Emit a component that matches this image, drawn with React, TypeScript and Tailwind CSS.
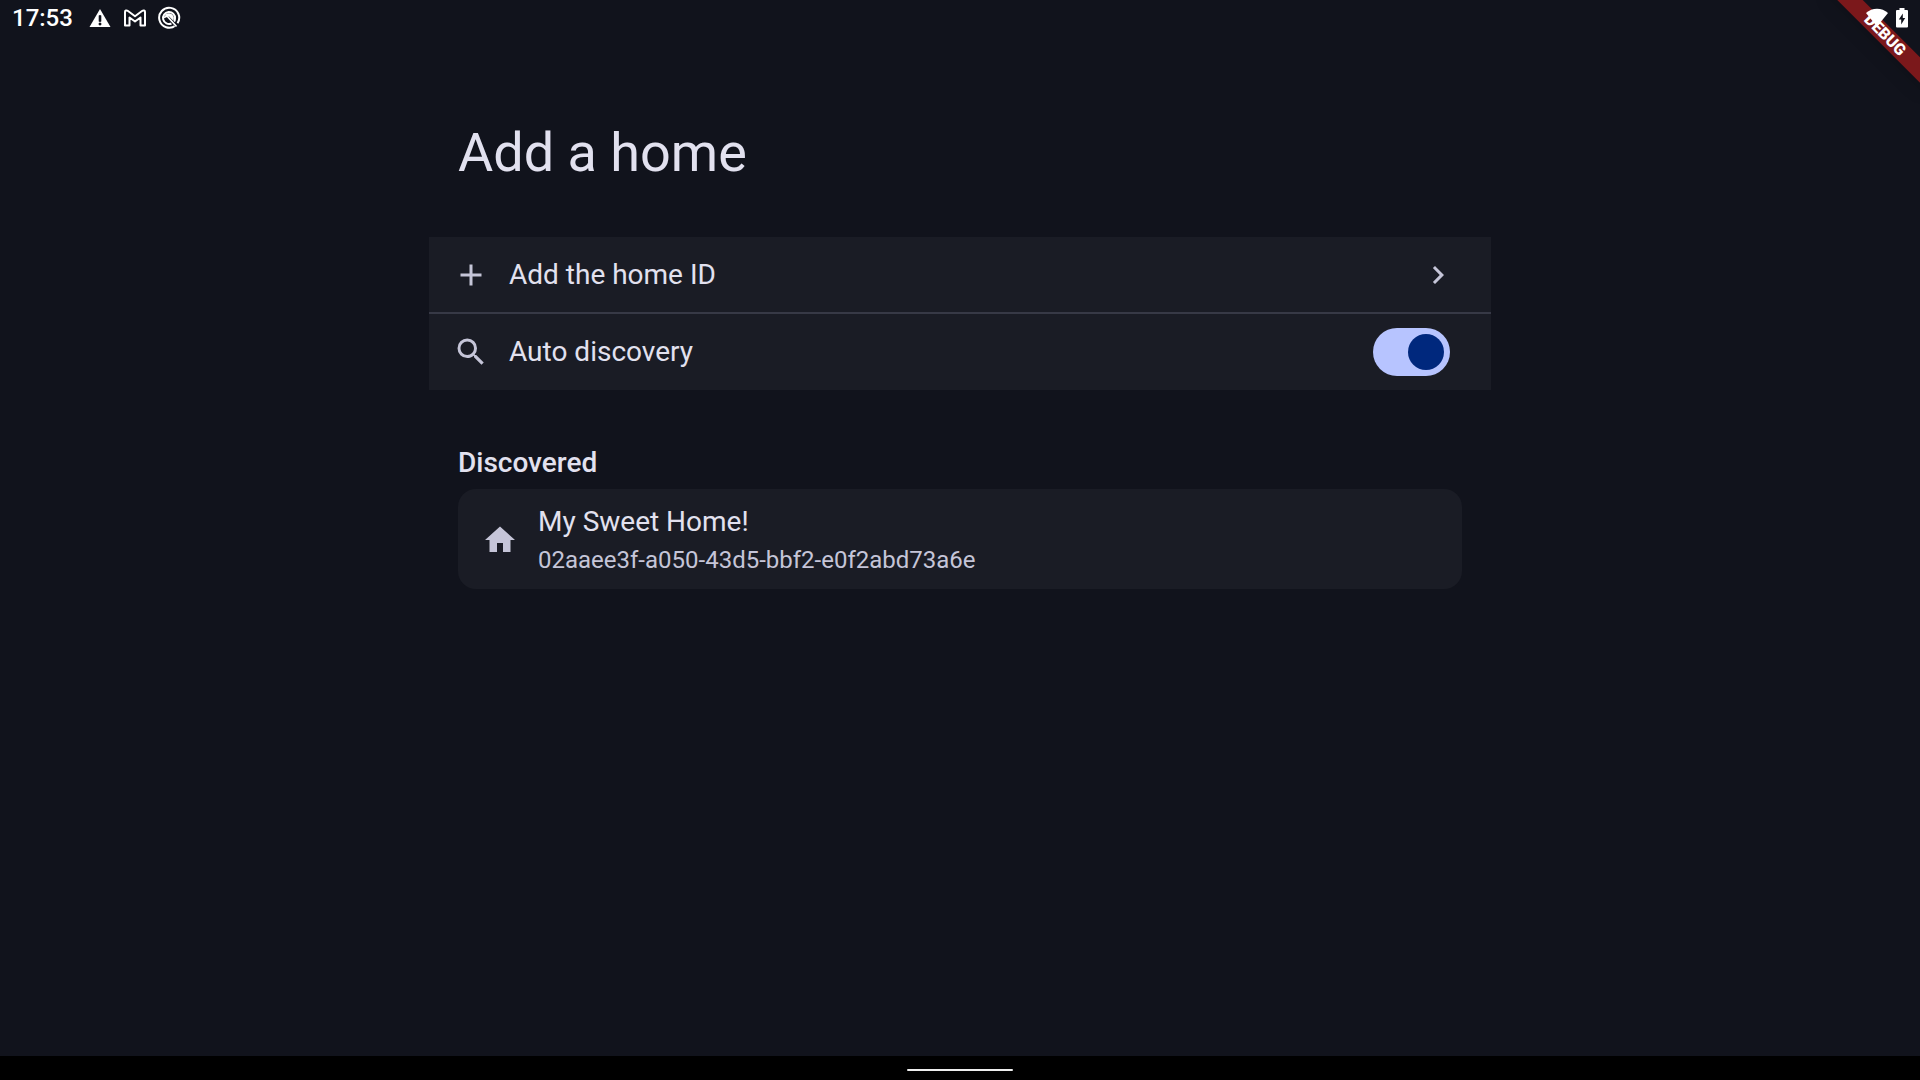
import { MdAdd, MdChevronRight, MdHome, MdSearch } from "react-icons/md";

function StatusBar() {
  return (
    <header className="relative z-10 flex h-9 items-center justify-between pl-3 pr-3 text-white">
      <div className="flex items-center">
        <time className="text-2xl font-medium">17:53</time>
        <svg viewBox="0 0 22 20" className="ml-4 h-5 w-[22px]" aria-label="Warning">
          <path d="M11 1L21.500 19H.5z" fill="currentColor" />
          <path d="M10 7.500h2v6h-2zM10 15h2v2h-2z" fill="#11131c" stroke="#11131c" strokeWidth="0.6" />
        </svg>
        <svg viewBox="0 0 24 20" className="ml-3 h-5 w-6" fill="none" stroke="currentColor" strokeWidth="2" strokeLinejoin="round" aria-label="Mail">
          <path d="M2 17.500V4C2 2.500 3.500 2 5 3l7 5.200L19 3c1.500-1 3-.5 3 1v13.500h-4.500V9.500L12 13.500 6.500 9.500v8z" />
        </svg>
        <svg viewBox="0 0 24 24" className="ml-2.5 size-6" fill="none" stroke="currentColor" strokeWidth="2" aria-label="Search">
          <path d="M18.500 19.500A10 10 0 1 1 20.500 17.300" />
          <path d="M14.500 17.500A6 6 0 1 1 18 12.500c0 1.500-.3 2.300-1 3.300" />
          <path d="M7.500 9.500C10 6 15.500 6.500 16.700 11c.3 1.500 0 3-.7 4l-4.500-4.500z" fill="currentColor" stroke="none" />
          <path d="M11 11.500l9 9" stroke="#11131c" strokeWidth="3" />
          <path d="M7 11.500l3-1.500 9.500 10.500" strokeWidth="1.800" />
        </svg>
      </div>
      <div className="flex items-center">
        <svg viewBox="0 0 22 20" className="h-5 w-[22px]" fill="currentColor" aria-label="Wi-Fi">
          <path d="M0 5C6-.8 16-.8 22 5L11 18.500z" />
        </svg>
        <svg viewBox="0 0 12 20" className="ml-2 h-5 w-3" aria-label="Battery charging">
          <path d="M3.500 0h5v2H11q1 0 1 1v15.500q0 1-1 1H1q-1 0-1-1V3q0-1 1-1h2.500z" fill="currentColor" />
          <path d="M6.800 5.500v4.500H9.200L5.200 16.500V11.500H2.800z" fill="#11131c" />
        </svg>
      </div>
    </header>
  );
}

function DebugBanner() {
  return (
    <div className="pointer-events-none absolute right-0 top-0 size-28 overflow-hidden">
      <div className="absolute -right-[37px] top-[26px] flex h-[18px] w-36 rotate-45 items-center justify-center bg-[#7b181b] text-base font-black text-white shadow-lg">
        DEBUG
      </div>
    </div>
  );
}

export default function App() {
  return (
    <div className="relative flex min-h-screen flex-col bg-[#11131c] font-['Roboto',sans-serif] text-[#e2e1ef]">
      <DebugBanner />
      <StatusBar />
      <main className="mx-auto w-full max-w-[1062px] flex-1">
        <h1 className="px-[29px] pb-[52px] pt-[84px] text-[54px] leading-[65px]">Add a home</h1>
        <section className="divide-y-2 divide-[#373946] bg-[#1a1c25] text-[28px] leading-9">
          <button type="button" className="flex h-[77px] w-full items-center pl-6 pr-[35px] text-left">
            <MdAdd className="size-9 text-[#c5c5d8]" />
            <span className="ml-5 flex-1">Add the home ID</span>
            <MdChevronRight className="size-9 text-[#c5c5d8]" />
          </button>
          <label className="flex h-[76px] items-center pl-6 pr-[41px]">
            <MdSearch className="size-9 text-[#c5c5d8]" />
            <span className="ml-5 flex-1">Auto discovery</span>
            <input
              type="checkbox"
              role="switch"
              defaultChecked
              className="flex h-12 w-[77px] appearance-none items-center rounded-full bg-[#b7c4ff] px-1.5 before:size-9 before:rounded-full before:bg-[#00287d] checked:justify-end"
            />
          </label>
        </section>
        <section className="px-[29px] pt-[55px]">
          <h2 className="mb-2 text-[28px] font-medium leading-9">Discovered</h2>
          <button type="button" className="flex h-[100px] w-full items-center rounded-[18px] bg-[#1a1c25] px-6 pt-0.5 text-left">
            <MdHome className="size-9 text-[#c5c5d8]" />
            <span className="ml-5 flex flex-col">
              <span className="text-[28px] leading-10">My Sweet Home!</span>
              <span className="text-2xl leading-9 text-[#c5c5d8]">02aaee3f-a050-43d5-bbf2-e0f2abd73a6e</span>
            </span>
          </button>
        </section>
      </main>
      <footer className="flex h-6 items-center justify-center bg-black">
        <div className="mt-1 h-0.5 w-[106px] rounded-full bg-[#eeeeee]" />
      </footer>
    </div>
  );
}
